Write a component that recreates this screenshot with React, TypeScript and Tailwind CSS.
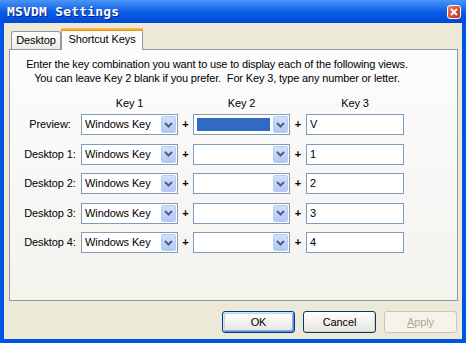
import React from 'react';

const rows = [
  { label: 'Preview:', key3: 'V', selected: true },
  { label: 'Desktop 1:', key3: '1', selected: false },
  { label: 'Desktop 2:', key3: '2', selected: false },
  { label: 'Desktop 3:', key3: '3', selected: false },
  { label: 'Desktop 4:', key3: '4', selected: false },
];

const DropButton: React.FC = () => (
  <div className="w-[15px] h-full flex items-center justify-center rounded-[2px] border border-[#b9caf0] bg-gradient-to-b from-[#d2e0fd] to-[#b4c8f6]">
    <svg width="9" height="6" viewBox="0 0 9 6">
      <path d="M1 1 L4.5 4.5 L8 1" fill="none" stroke="#4d6185" strokeWidth="2" />
    </svg>
  </div>
);

const Combo: React.FC<{ text?: string; selected?: boolean }> = ({ text, selected }) => (
  <div className="w-[97px] h-[21px] border border-[#7f9db9] bg-white flex items-stretch p-px">
    <div className="flex-1 flex items-center pl-[2px] pr-[3px] py-[2px]">
      {selected ? (
        <div className="w-full h-full bg-[#316ac5]" />
      ) : (
        <span className="leading-none">{text}</span>
      )}
    </div>
    <DropButton />
  </div>
);

const Button: React.FC<{ label: React.ReactNode; isDefault?: boolean; disabled?: boolean }> = ({ label, isDefault, disabled }) => (
  <div
    className={
      disabled
        ? 'w-[73px] h-[22px] rounded-[3px] border border-[#c9c7ba] bg-[#f5f4ea] text-[#aca899] flex items-center justify-center'
        : isDefault
        ? 'w-[73px] h-[22px] rounded-[3px] border border-[#003c74] bg-gradient-to-b from-white to-[#e6e5de] flex items-center justify-center shadow-[inset_1px_1px_0_#cee7ff,inset_-1px_-1px_0_#6982ee,inset_2px_2px_0_#bcd4f6,inset_-2px_-2px_0_#89ade4]'
        : 'w-[73px] h-[22px] rounded-[3px] border border-[#003c74] bg-gradient-to-b from-white to-[#e6e5de] flex items-center justify-center shadow-[inset_-1px_-1px_0_#d6d0c5]'
    }
  >
    {label}
  </div>
);

export default function App() {
  return (
    <div
      className="w-[466px] h-[343px] flex flex-col bg-[#0054e3] text-[11px] tracking-[-0.1px] text-black overflow-hidden"
      style={{ fontFamily: '"Liberation Sans", Arial, sans-serif' }}
    >
      {/* title bar */}
      <div className="h-[23px] shrink-0 flex items-center justify-between pl-[7px] pr-[5px] bg-gradient-to-b from-[#4a94f8] via-[#0a5fe6] to-[#0048d6]">
        <span
          className="text-white font-bold text-[13px] tracking-[0.2px] [text-shadow:1px_1px_0_#0a1e82]"
          style={{ fontFamily: '"DejaVu Sans Mono", monospace' }}
        >
          MSVDM Settings
        </span>
        <div className="w-[14px] h-[14px] mt-[1px] rounded-[3px] border border-white bg-gradient-to-br from-[#e8876b] via-[#d8502f] to-[#c13a1a] flex items-center justify-center">
          <svg width="8" height="8" viewBox="0 0 8 8">
            <path d="M1 1 L7 7 M7 1 L1 7" stroke="white" strokeWidth="1.8" />
          </svg>
        </div>
      </div>

      {/* body */}
      <div className="flex-1 mx-[4px] mb-[4px] bg-[#ece9d8] flex flex-col pt-[5px] pl-[5px] pr-[4px]">
        {/* tabs */}
        <div className="h-[22px] flex items-end pl-[2px] relative z-10">
          <div className="w-[50px] h-[18px] mb-px border border-b-0 border-[#919b9c] rounded-t-[3px] bg-gradient-to-b from-white to-[#ecebe6] flex items-center justify-center">
            Desktop
          </div>
          <div className="w-[82px] h-[22px] border-x border-[#919b9c] rounded-t-[3px] bg-[#fcfcfe] flex flex-col">
            <div className="h-[3px] rounded-t-[2px] bg-gradient-to-b from-[#ffc83c] to-[#e68b2c] -mx-px" />
            <div className="flex-1 flex items-center justify-center pb-[2px]">Shortcut Keys</div>
          </div>
        </div>

        {/* panel */}
        <div className="h-[252px] -mt-px border border-[#919b9c] bg-gradient-to-b from-[#fcfcfe] to-[#f4f3ee] flex flex-col">
          <div className="w-[400px] ml-[7px] mt-[7px] text-center leading-[14px] tracking-[-0.15px]">
            <div>Enter the key combination you want to use to display each of the following views.</div>
            <div>You can leave Key 2 blank if you prefer.&nbsp; For Key 3, type any number or letter.</div>
          </div>

          <div className="flex mt-[11px] h-[14px] items-center leading-none">
            <div className="w-[71px]" />
            <div className="w-[97px] text-center">Key 1</div>
            <div className="w-[15px]" />
            <div className="w-[97px] text-center">Key 2</div>
            <div className="w-[16px]" />
            <div className="w-[98px] text-center">Key 3</div>
          </div>

          <div className="flex flex-col gap-[8.5px] mt-[4px]">
            {rows.map((r) => (
              <div key={r.label} className="flex items-center h-[21px]">
                <div className="w-[62px] ml-[9px] text-center">{r.label}</div>
                <Combo text="Windows Key" />
                <div className="w-[15px] text-center font-bold">+</div>
                <Combo selected={r.selected} />
                <div className="w-[16px] text-center font-bold">+</div>
                <div className="w-[98px] h-[21px] border border-[#7f9db9] bg-white flex items-center pl-[3px]">
                  {r.key3}
                </div>
              </div>
            ))}
          </div>
        </div>

        {/* buttons */}
        <div className="flex justify-end gap-[8px] mt-[10px] pr-[1px]">
          <Button label="OK" isDefault />
          <Button label="Cancel" />
          <Button
            label={
              <span>
                <span className="underline">A</span>pply
              </span>
            }
            disabled
          />
        </div>
      </div>
    </div>
  );
}
